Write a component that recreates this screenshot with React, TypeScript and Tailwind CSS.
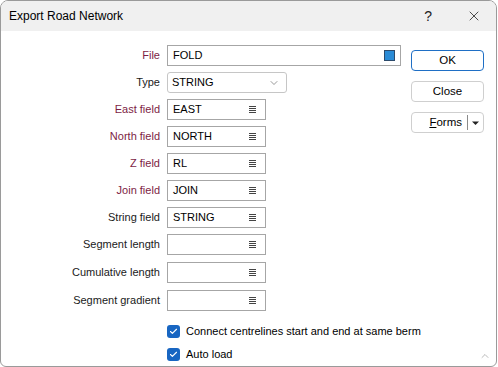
import { Check, ChevronDown, ChevronUp, X } from 'lucide-react'

const FONT = { fontFamily: '"Liberation Sans", Arial, sans-serif' }

const RED = 'text-[#7d1d44]'

function ListIcon() {
  return (
    <svg width="9" height="9" viewBox="0 0 9 9" className="text-[#444]">
      <path d="M1 1.5h7M1 3.5h7M1 5.5h7M1 7.5h7" stroke="currentColor" strokeWidth="1" />
    </svg>
  )
}

function Label({ text, required }: { text: string; required?: boolean }) {
  return (
    <div className={`w-[159px] shrink-0 text-right text-[11px] ${required ? RED : 'text-[#1a1a1a]'}`}>
      {text}
    </div>
  )
}

function FieldRow({ label, value, required }: { label: string; value: string; required?: boolean }) {
  return (
    <div className="flex items-center h-[21px]">
      <Label text={label} required={required} />
      <div className="ml-[7px] w-[99px] h-[21px] border border-[#a6a6a6] bg-white flex items-center pl-[5px] pr-[8px]">
        <span className="flex-1 text-[11px] text-black">{value}</span>
        <ListIcon />
      </div>
    </div>
  )
}

function CheckRow({ text }: { text: string }) {
  return (
    <div className="flex items-center h-[13px] whitespace-nowrap">
      <div className="w-[13px] h-[13px] shrink-0 rounded-[3px] bg-[#1866c2] flex items-center justify-center">
        <Check size={9} strokeWidth={3} className="text-white" />
      </div>
      <span className="ml-[6px] text-[11px] text-black">{text}</span>
    </div>
  )
}

export default function App() {
  return (
    <div style={FONT} className="w-[498px] h-[367px] bg-white">
      <div className="w-[497px] h-[367px] border border-[#9a9a9a] rounded-t-[8px] rounded-b-[6px] overflow-hidden flex flex-col bg-white">
        {/* title bar */}
        <div className="h-[30px] bg-[#f0f0f0] flex items-center shrink-0">
          <span className="ml-[8px] text-[12px] text-black">Export Road Network</span>
          <span className="ml-auto mr-[34px] text-[14px] text-[#222]">?</span>
          <X size={16} strokeWidth={1.2} className="mr-[14px] text-[#222]" />
        </div>

        {/* body */}
        <div className="relative flex-1 flex">
          <div className="w-[400px] shrink-0 flex flex-col pt-[14px]">
            <div className="flex items-center h-[21px]">
              <Label text="File" required />
              <div className="ml-[7px] w-[234px] h-[21px] border border-[#a6a6a6] flex items-center pl-[5px] pr-[5px]">
                <span className="flex-1 text-[11px] text-black">FOLD</span>
                <div className="w-[11px] h-[11px] bg-[#2a8bd6] border border-[#2c4a6b]" />
              </div>
            </div>

            <div className="flex items-center h-[21px] mt-[6px]">
              <Label text="Type" />
              <div className="ml-[7px] w-[120px] h-[21px] border border-[#c6c6c6] rounded-[3px] flex items-center pl-[4px] pr-[6px]">
                <span className="flex-1 text-[11px] text-black">STRING</span>
                <ChevronDown size={12} strokeWidth={1.2} className="text-[#555]" />
              </div>
            </div>

            <div className="flex flex-col gap-[6px] mt-[6px]">
              <FieldRow label="East field" value="EAST" required />
              <FieldRow label="North field" value="NORTH" required />
              <FieldRow label="Z field" value="RL" required />
              <FieldRow label="Join field" value="JOIN" required />
              <FieldRow label="String field" value="STRING" />
            </div>

            <div className="flex flex-col gap-[7px] mt-[6px]">
              <FieldRow label="Segment length" value="" />
              <FieldRow label="Cumulative length" value="" />
              <FieldRow label="Segment gradient" value="" />
            </div>

            <div className="flex flex-col gap-[10px] mt-[14px] ml-[166px]">
              <CheckRow text="Connect centrelines start and end at same berm" />
              <CheckRow text="Auto load" />
            </div>
          </div>

          <div className="flex flex-col gap-[10px] pt-[19px] ml-auto mr-[12px]">
            <div className="w-[73px] h-[21px] border border-[#1f6fc5] rounded-[4px] flex items-center justify-center text-[11.5px] text-black">
              OK
            </div>
            <div className="w-[73px] h-[21px] border border-[#cfcfcf] rounded-[4px] flex items-center justify-center text-[11.5px] text-black">
              Close
            </div>
            <div className="w-[73px] h-[21px] border border-[#cfcfcf] rounded-[4px] flex items-center text-[11.5px] text-black">
              <span className="flex-1 text-right pr-[5px]">
                <span className="underline">F</span>orms
              </span>
              <div className="w-px h-[15px] bg-[#8a8a8a]" />
              <svg width="15" height="10" viewBox="0 0 15 10">
                <path d="M4 3.5h7L7.5 7z" fill="#222" />
              </svg>
            </div>
          </div>

          <ChevronUp size={12} strokeWidth={1} className="absolute right-[5px] bottom-[4px] text-[#777]" />
        </div>
      </div>
    </div>
  )
}
